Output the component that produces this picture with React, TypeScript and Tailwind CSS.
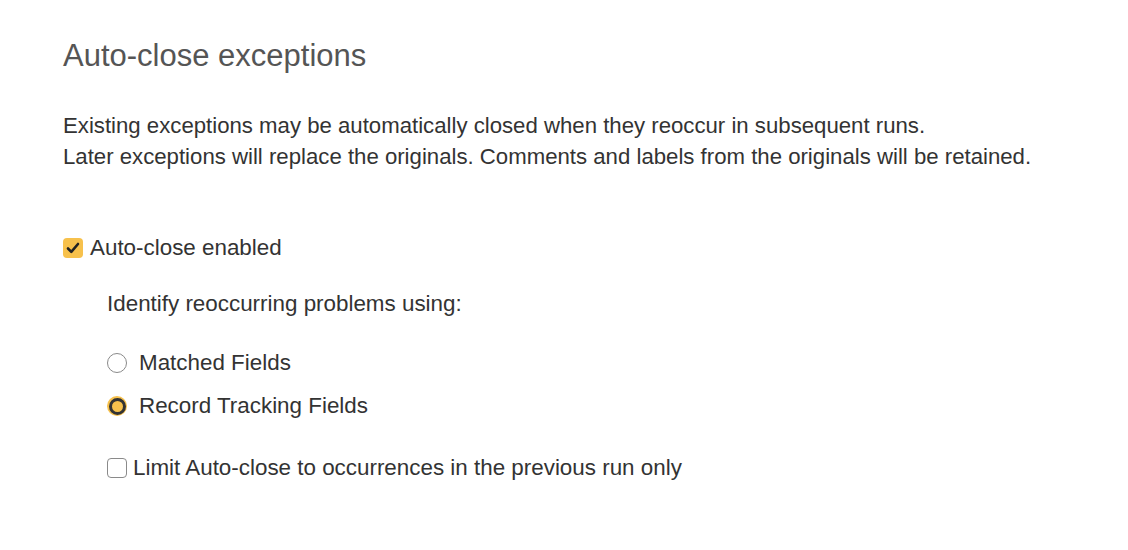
import React from "react";

export default function App() {
  return (
    <div className="w-[1128px] h-[550px] bg-white text-[#333] pl-[63px] pt-[37px]" style={{ fontFamily: '"Liberation Sans", Arial, sans-serif' }}>
      <h1 className="text-[31px] leading-[38px] font-light text-[#555]">Auto-close exceptions</h1>
      <div className="mt-[35px] text-[22.2px] leading-[31px] text-[#333]">
        <p>Existing exceptions may be automatically closed when they reoccur in subsequent runs.</p>
        <p>Later exceptions will replace the originals. Comments and labels from the originals will be retained.</p>
      </div>
      <label className="mt-[62px] flex items-center h-[28px] text-[22.4px]">
        <span className="w-[20px] h-[20px] rounded-[4px] bg-[#f7c14c] flex items-center justify-center">
          <svg width="16" height="16" viewBox="0 0 16 16" fill="none">
            <path d="M3 8.5 L6.3 11.8 L13 4" stroke="#222" strokeWidth="2.6" strokeLinecap="round" strokeLinejoin="round" />
          </svg>
        </span>
        <span className="ml-[7px]">Auto-close enabled</span>
      </label>
      <div className="pl-[44px]">
        <p className="mt-[27px] h-[30px] leading-[30px] text-[22.4px]">Identify reoccurring problems using:</p>
        <label className="mt-[29px] flex items-center h-[30px] text-[22.4px]">
          <span className="w-[20px] h-[20px] rounded-full border-[1.5px] border-[#8a8a8a] bg-white" />
          <span className="ml-[12px]">Matched Fields</span>
        </label>
        <label className="mt-[13px] flex items-center h-[30px] text-[22.4px]">
          <span className="w-[20px] h-[20px] rounded-full bg-[#f7c14c] flex items-center justify-center">
            <span className="w-[17px] h-[17px] rounded-full border-[3px] border-[#333] bg-[#f7c14c]" />
          </span>
          <span className="ml-[12px]">Record Tracking Fields</span>
        </label>
        <label className="mt-[32px] flex items-center h-[30px] text-[22.4px]">
          <span className="w-[20px] h-[20px] rounded-[4px] border-[1.5px] border-[#8a8a8a] bg-white" />
          <span className="ml-[6px]">Limit Auto-close to occurrences in the previous run only</span>
        </label>
      </div>
    </div>
  );
}
